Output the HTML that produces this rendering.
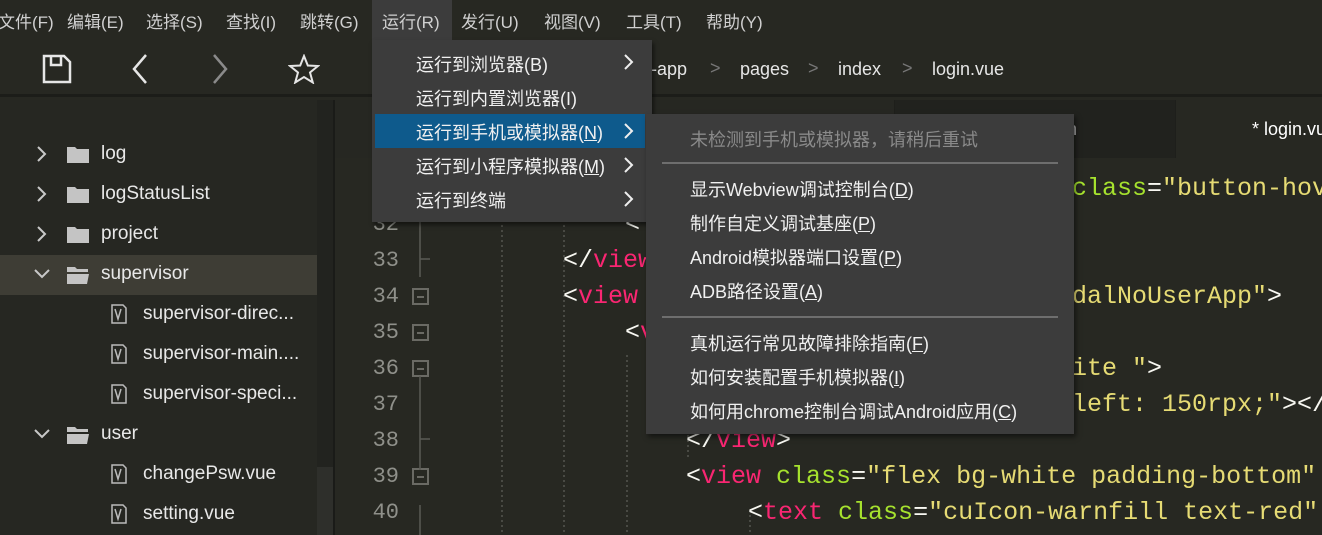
<!DOCTYPE html>
<html><head><meta charset="utf-8"><style>
*{margin:0;padding:0;box-sizing:border-box}
body{width:1322px;height:535px;overflow:hidden;background:#272822;position:relative;font-family:"Liberation Sans","Noto Sans CJK SC",sans-serif;color:#d6d6d6}
.a{position:absolute;white-space:nowrap}
.mb{font-size:17px;top:8px;color:#d0d0d0}
.code{font-family:"Liberation Mono","DejaVu Sans Mono",monospace;font-size:25px;white-space:pre}
.t{color:#f92672}.g{color:#a6e22e}.y{color:#e6db74}.w{color:#f8f8f2}
.ln{font-family:"Liberation Mono",monospace;font-size:22px;color:#8f908a;width:50px;text-align:right;left:349px}
.side{font-size:19px;color:#e8e8e8}
.mi{font-size:18px;color:#f0f0f0}
.fold{width:17px;height:17px;border:2px solid #6a6a64;left:412px}
.fold:after{content:"";position:absolute;left:3px;right:3px;top:6px;height:2px;background:#6a6a64}
</style></head><body>
<div class="a" style="left:0;top:0;width:1322px;height:40px;background:#272822"></div>
<div class="a" style="left:372px;top:0;width:80px;height:40px;background:#3c3c3c"></div>
<div class="a mb" style="left:-2px">文件(F)</div>
<div class="a mb" style="left:67px">编辑(E)</div>
<div class="a mb" style="left:146px">选择(S)</div>
<div class="a mb" style="left:226px">查找(I)</div>
<div class="a mb" style="left:300px">跳转(G)</div>
<div class="a mb" style="left:382px">运行(R)</div>
<div class="a mb" style="left:461px">发行(U)</div>
<div class="a mb" style="left:544px">视图(V)</div>
<div class="a mb" style="left:626px">工具(T)</div>
<div class="a mb" style="left:706px">帮助(Y)</div>
<div class="a" style="left:0;top:40px;width:1322px;height:57px;background:#272822;border-bottom:3px solid #1c1d19"></div>
<svg class="a" style="left:40px;top:52px" width="34" height="34" viewBox="0 0 34 34" fill="none" stroke="#e6e6e6" stroke-width="2.5"><path d="M4 4H24L30 10V30H4Z M11 4V13H21V4"/></svg>
<svg class="a" style="left:128px;top:52px" width="24" height="34" viewBox="0 0 24 34" fill="none" stroke="#e6e6e6" stroke-width="2.5"><path d="M18 3L6 17L18 31"/></svg>
<svg class="a" style="left:208px;top:52px" width="24" height="34" viewBox="0 0 24 34" fill="none" stroke="#8a8a8a" stroke-width="2.5"><path d="M6 3L18 17L6 31"/></svg>
<svg class="a" style="left:288px;top:54px" width="32" height="30" viewBox="0 0 32 30" fill="none" stroke="#e6e6e6" stroke-width="2"><path d="M16 2L19.8 11.5L30 12L22 18.5L24.8 28.5L16 23L7.2 28.5L10 18.5L2 12L12.2 11.5Z"/></svg>
<div class="a" style="left:651px;top:59px;font-size:18px;color:#e6e6e6">-app</div>
<div class="a" style="left:710px;top:58px;font-size:18px;color:#777">&gt;</div>
<div class="a" style="left:740px;top:59px;font-size:18px;color:#e6e6e6">pages</div>
<div class="a" style="left:808px;top:58px;font-size:18px;color:#777">&gt;</div>
<div class="a" style="left:838px;top:59px;font-size:18px;color:#e6e6e6">index</div>
<div class="a" style="left:902px;top:58px;font-size:18px;color:#777">&gt;</div>
<div class="a" style="left:932px;top:59px;font-size:18px;color:#e6e6e6">login.vue</div>
<div class="a" style="left:0;top:100px;width:317px;height:435px;background:#262722"></div>
<div class="a" style="left:317px;top:100px;width:16px;height:435px;background:#22231f"></div>
<div class="a" style="left:317px;top:467px;width:16px;height:68px;background:#2e2f2b"></div>
<div class="a" style="left:333px;top:100px;width:2px;height:435px;background:#1a1b18"></div>
<div class="a" style="left:0;top:255px;width:317px;height:40px;background:#3e3d35"></div>
<svg class="a" style="left:0;top:100px" width="317" height="435" viewBox="0 100 317 435" fill="none" stroke="#c8c8c8" stroke-width="2">
<path d="M38 147l7 7l-7 7M38 187l7 7l-7 7M38 227l7 7l-7 7M35 270l7 7l7-7M35 430l7 7l7-7"/>
<g fill="#c4c4c4" stroke="none"><path d="M67 147h8l2 2h12v14h-22z"/><path d="M67 187h8l2 2h12v14h-22z"/><path d="M67 227h8l2 2h12v14h-22z"/><path d="M67 267h8l2 2h11v3h-21z M67 274h22l-2 10h-20z"/><path d="M67 427h8l2 2h11v3h-21z M67 434h22l-2 10h-20z"/></g>
<g stroke="#bbb" stroke-width="1.5"><path d="M112 305h11l3 3v15h-14z M115 309l3 10l3-10"/><path d="M112 345h11l3 3v15h-14z M115 349l3 10l3-10"/><path d="M112 385h11l3 3v15h-14z M115 389l3 10l3-10"/><path d="M112 465h11l3 3v15h-14z M115 469l3 10l3-10"/><path d="M112 505h11l3 3v15h-14z M115 509l3 10l3-10"/></g>
</svg>
<div class="a side" style="left:101px;top:143px">log</div>
<div class="a side" style="left:101px;top:183px">logStatusList</div>
<div class="a side" style="left:101px;top:223px">project</div>
<div class="a side" style="left:101px;top:263px">supervisor</div>
<div class="a side" style="left:143px;top:303px">supervisor-direc...</div>
<div class="a side" style="left:143px;top:343px">supervisor-main....</div>
<div class="a side" style="left:143px;top:383px">supervisor-speci...</div>
<div class="a side" style="left:101px;top:423px">user</div>
<div class="a side" style="left:143px;top:463px">changePsw.vue</div>
<div class="a side" style="left:143px;top:503px">setting.vue</div>
<div class="a" style="left:335px;top:100px;width:987px;height:58px;background:#1e1f1b"></div>
<div class="a" style="left:335px;top:100px;width:559px;height:58px;background:#262722"></div>
<div class="a" style="left:895px;top:100px;width:280px;height:58px;background:#21221e"></div>
<div class="a" style="left:1176px;top:100px;width:146px;height:58px;background:#272822"></div>
<div class="a" style="left:1067px;top:119px;font-size:18px;color:#bbb">n</div>
<div class="a" style="left:1252px;top:119px;font-size:18px;color:#fff">* login.vue</div>
<div class="a ln" style="top:212px">32</div>
<div class="a ln" style="top:248px">33</div>
<div class="a ln" style="top:284px">34</div>
<div class="a ln" style="top:320px">35</div>
<div class="a ln" style="top:356px">36</div>
<div class="a ln" style="top:392px">37</div>
<div class="a ln" style="top:428px">38</div>
<div class="a ln" style="top:464px">39</div>
<div class="a ln" style="top:500px">40</div>
<div class="a fold" style="top:288px"></div>
<div class="a fold" style="top:324px"></div>
<div class="a fold" style="top:360px"></div>
<div class="a fold" style="top:468px"></div>
<svg class="a" style="left:415px;top:160px" width="30" height="375" fill="none" stroke="#5a5a54" stroke-width="1.5"><path d="M5 0V117M5 99H15M5 216V310M5 279H15M5 345V375"/></svg>
<svg class="a" style="left:500px;top:160px" width="500" height="375" fill="none" stroke="#55554f" stroke-width="1.5" stroke-dasharray="2 3"><path d="M2 60V375M64 60V375M127 195V375M188 195V300M250 350V375"/></svg>
<div class="a code" style="left:1072px;top:174px"><span class="g">class</span><span class="w">=</span><span class="y">"button-hov</span></div>
<div class="a code" style="left:625px;top:210px"><span class="w">&lt;</span></div>
<div class="a code" style="left:563px;top:246px"><span class="w">&lt;/</span><span class="t">view</span></div>
<div class="a code" style="left:563px;top:282px"><span class="w">&lt;</span><span class="t">view</span></div>
<div class="a code" style="left:1072px;top:282px"><span class="y">dalNoUserApp"</span><span class="w">&gt;</span></div>
<div class="a code" style="left:625px;top:318px"><span class="w">&lt;</span><span class="t">v</span></div>
<div class="a code" style="left:1072px;top:354px"><span class="y">ite "</span><span class="w">&gt;</span></div>
<div class="a code" style="left:1072px;top:390px"><span class="y">left: 150rpx;"</span><span class="w">&gt;&lt;/</span></div>
<div class="a code" style="left:686px;top:426px"><span class="w">&lt;/</span><span class="t">view</span><span class="w">&gt;</span></div>
<div class="a code" style="left:686px;top:462px"><span class="w">&lt;</span><span class="t">view</span> <span class="g">class</span><span class="w">=</span><span class="y">"flex bg-white padding-bottom"</span></div>
<div class="a code" style="left:748px;top:498px"><span class="w">&lt;</span><span class="t">text</span> <span class="g">class</span><span class="w">=</span><span class="y">"cuIcon-warnfill text-red"</span></div>
<div class="a" style="left:372px;top:40px;width:280px;height:182px;background:#3c3c3c;box-shadow:2px 3px 4px rgba(0,0,0,.5)"></div>
<div class="a" style="left:375px;top:114px;width:270px;height:34px;background:#0e5a8c"></div>
<div class="a mi" style="left:416px;top:51px">运行到浏览器(B)</div>
<div class="a mi" style="left:416px;top:85px">运行到内置浏览器(I)</div>
<div class="a mi" style="left:416px;top:119px">运行到手机或模拟器(<u>N</u>)</div>
<div class="a mi" style="left:416px;top:153px">运行到小程序模拟器(<u>M</u>)</div>
<div class="a mi" style="left:416px;top:187px">运行到终端</div>
<svg class="a" style="left:622px;top:52px" width="14" height="160" fill="none" stroke="#eee" stroke-width="2"><path d="M3 3l7 7l-7 7M3 72l7 7l-7 7M3 106l7 7l-7 7M3 140l7 7l-7 7"/></svg>
<div class="a" style="left:646px;top:114px;width:428px;height:320px;background:#3c3c3c;box-shadow:2px 3px 5px rgba(0,0,0,.5)"></div>
<div class="a mi" style="left:690px;top:126px;color:#8a8a8a">未检测到手机或模拟器，请稍后重试</div>
<div class="a" style="left:662px;top:162px;width:396px;height:2px;background:#6e6e6e"></div>
<div class="a mi" style="left:690px;top:176px">显示Webview调试控制台(<u>D</u>)</div>
<div class="a mi" style="left:690px;top:210px">制作自定义调试基座(<u>P</u>)</div>
<div class="a mi" style="left:690px;top:244px">Android模拟器端口设置(<u>P</u>)</div>
<div class="a mi" style="left:690px;top:278px">ADB路径设置(<u>A</u>)</div>
<div class="a" style="left:662px;top:316px;width:396px;height:2px;background:#6e6e6e"></div>
<div class="a mi" style="left:690px;top:330px">真机运行常见故障排除指南(<u>F</u>)</div>
<div class="a mi" style="left:690px;top:364px">如何安装配置手机模拟器(<u>I</u>)</div>
<div class="a mi" style="left:690px;top:398px">如何用chrome控制台调试Android应用(<u>C</u>)</div>
</body></html>
